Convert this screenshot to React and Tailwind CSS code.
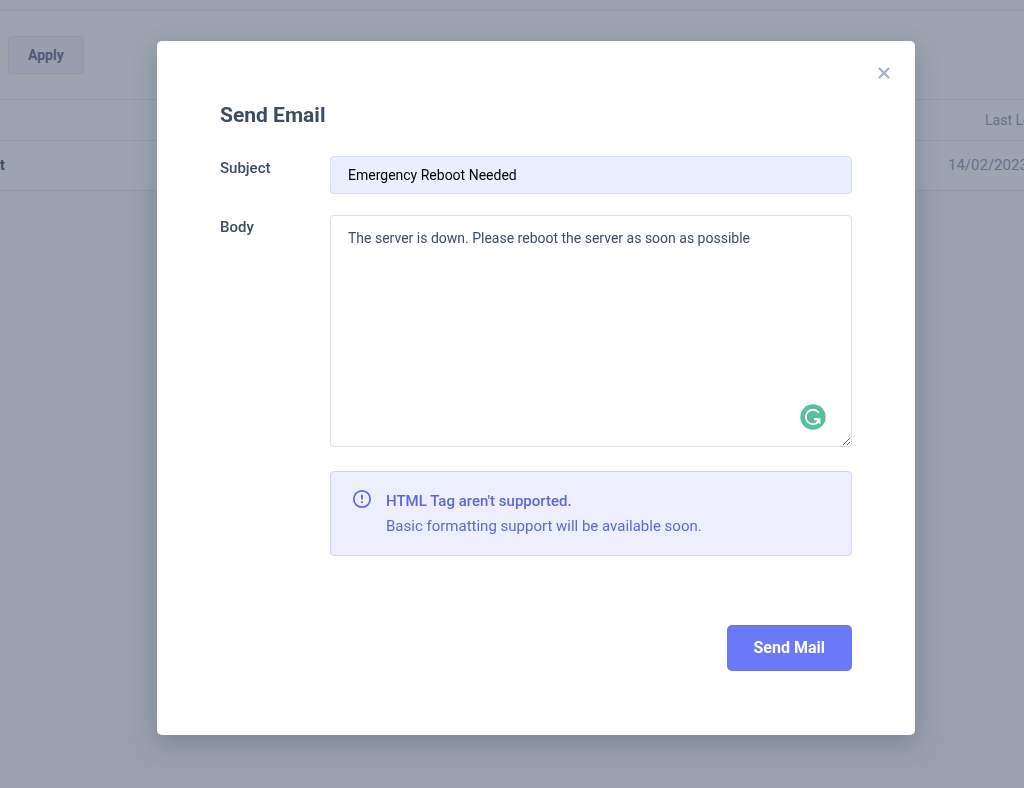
import { useState } from 'react';
import { X } from 'lucide-react';

function AlertIcon() {
  return (
    <svg viewBox="0 0 20 20" className="size-5 shrink-0" fill="none" stroke="currentColor" aria-hidden="true">
      <circle cx="10" cy="10" r="8.2" strokeWidth="1.7" />
      <path d="M10 5.8v4.8" strokeWidth="1.8" />
      <path d="M10 12.3v1.8" strokeWidth="1.8" />
    </svg>
  );
}

function GrammarBadge() {
  return (
    <svg viewBox="0 0 26 26" className="absolute right-[26px] bottom-[17px] size-[26px]" fill="none" aria-hidden="true">
      <circle cx="13" cy="13" r="12.7" fill="#57bf9c" />
      <path d="M18.4 8.2A7.2 7.2 0 1 0 18.6 17.6" stroke="#fff" strokeWidth="1.9" strokeLinecap="round" />
      <path d="M14 14.3h6.4v6.2l-1.9-1.7-1.6 1-1-1.6 1.7-1.9H14z" fill="#fff" />
    </svg>
  );
}

function UserList() {
  return (
    <div className="pt-[10px]">
      <div className="border-y border-[#8e99a9] border-t-[#9199a9] bg-[#9ca4b0]">
        <div className="h-[88px] px-2 pt-[25px]">
          <button className="h-[38px] rounded border border-[#8e98a9] bg-[#979fae] px-[19px] text-sm font-bold text-[#4d5b75]">Apply</button>
        </div>
      </div>
      <table className="w-full table-fixed border-collapse bg-[#9ca4b0] text-left whitespace-nowrap text-[#65728a]">
        <thead>
          <tr className="h-10 border-b border-[#8e99a9] text-sm">
            <th className="p-0"></th>
            <th className="w-[88px] overflow-hidden p-0 pl-[49px] font-normal">Last Login</th>
          </tr>
        </thead>
        <tbody>
          <tr className="h-[50px] border-b border-[#8e99a9]">
            <td className="p-0 text-sm font-bold text-[#3c4d62]">t</td>
            <td className="overflow-hidden p-0 pl-3 text-[15px]">14/02/2023</td>
          </tr>
        </tbody>
      </table>
    </div>
  );
}

export default function App() {
  const [subject, setSubject] = useState('Emergency Reboot Needed');
  const [body, setBody] = useState('The server is down. Please reboot the server as soon as possible');

  return (
    <div className="min-h-screen bg-[#99a0ad] font-['Roboto',sans-serif]">
      <UserList />

      <div className="fixed inset-0 overflow-y-auto pt-[41px] pb-10 pl-12">
        <div role="dialog" aria-modal="true" aria-labelledby="title" className="relative mx-auto w-full max-w-[758px] rounded-[5px] bg-white px-[63px] pt-[60px] pb-16 text-[#3c4d62] shadow-[0_8px_24px_rgba(54,74,99,0.3)]">
          <button aria-label="Close" className="absolute top-[23px] right-[22px] text-[#a9b2c0]">
            <X size={18} strokeWidth={3} />
          </button>

          <h2 id="title" className="text-[21px] leading-7 font-bold">Send Email</h2>

          <form onSubmit={(e) => e.preventDefault()}>
            <div className="mt-[27px] flex">
              <label htmlFor="subject" className="w-[110px] shrink-0 text-[15px] leading-6 font-medium">Subject</label>
              <input id="subject" value={subject} onChange={(e) => setSubject(e.target.value)} className="h-[38px] min-w-0 flex-1 rounded border border-[#dbdfea] bg-[#e9effe] px-[17px] text-sm text-black outline-none" />
            </div>

            <div className="mt-[21px] flex">
              <label htmlFor="body" className="w-[110px] shrink-0 text-[15px] leading-6 font-medium">Body</label>
              <div className="relative min-w-0 flex-1">
                <textarea id="body" value={body} onChange={(e) => setBody(e.target.value)} className="block h-[232px] w-full rounded border border-[#dbdfea] px-[17px] py-3 text-sm leading-5 outline-none" />
                <GrammarBadge />
              </div>
            </div>

            <div className="mt-6 ml-[110px] flex gap-3.5 rounded border border-[#d2d4fb] bg-[#edeefe] px-[21px] pt-[17px] pb-4 text-[15px] leading-[25px] text-[#5b69d6]">
              <AlertIcon />
              <div>
                <strong className="block font-medium">HTML Tag aren't supported.</strong>
                <p>Basic formatting support will be available soon.</p>
              </div>
            </div>

            <div className="mt-[69px] flex justify-end">
              <button type="submit" className="h-[46px] rounded-[5px] bg-[#6979f8] px-[27px] text-base font-bold text-white">Send Mail</button>
            </div>
          </form>
        </div>
      </div>
    </div>
  );
}
